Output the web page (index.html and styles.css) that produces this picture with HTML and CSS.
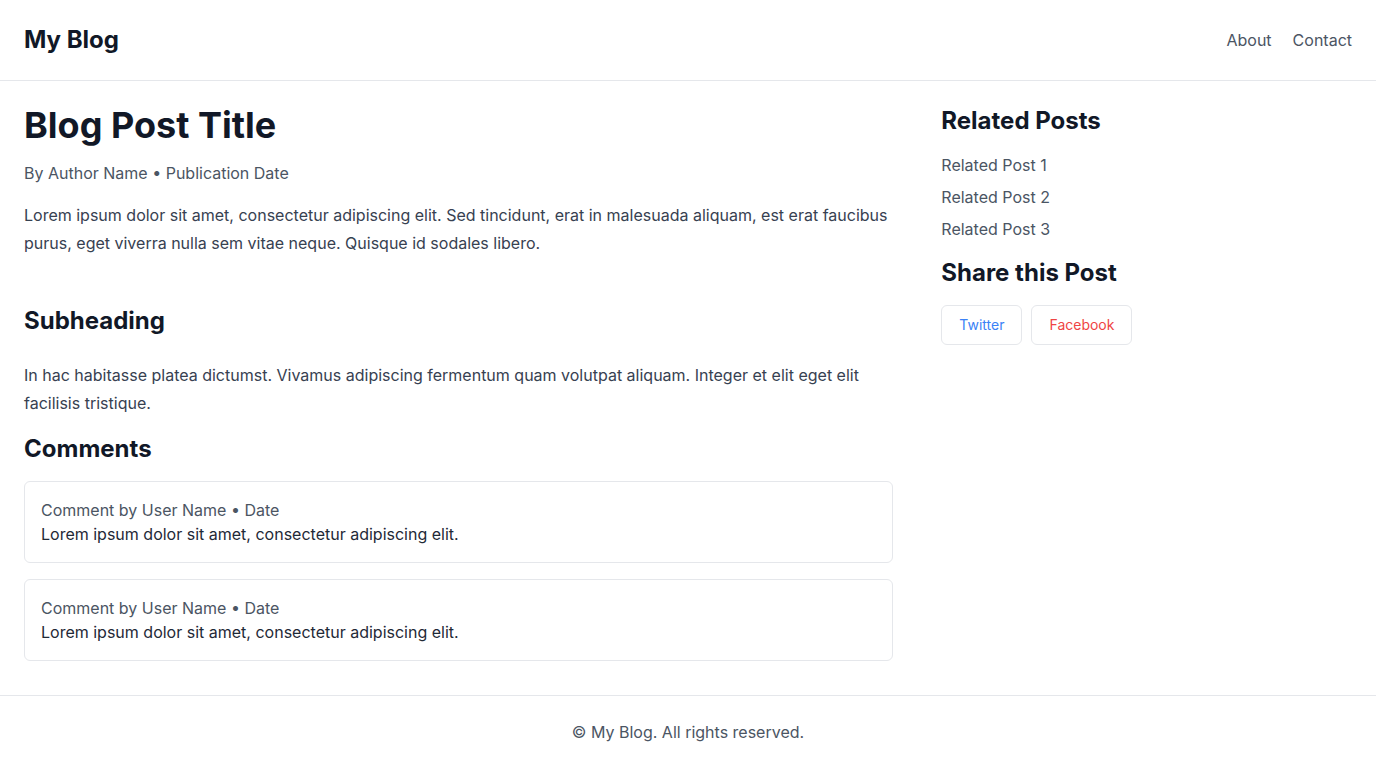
FILE: index.html
```html
<!DOCTYPE html>
<html lang="en">
<head>
<meta charset="utf-8">
<title>My Blog</title>
<link rel="stylesheet" href="styles.css">
</head>
<body>
<header class="site-header">
  <div class="brand">My Blog</div>
  <nav class="nav">
    <a href="#">About</a>
    <a href="#">Contact</a>
  </nav>
</header>
<main class="layout">
  <article class="post">
    <h1 class="post-title">Blog Post Title</h1>
    <p class="meta">By Author Name • Publication Date</p>
    <p class="body-text intro">Lorem ipsum dolor sit amet, consectetur adipiscing elit. Sed tincidunt, erat in malesuada aliquam, est erat faucibus purus, eget viverra nulla sem vitae neque. Quisque id sodales libero.</p>
    <h2 class="subheading">Subheading</h2>
    <p class="body-text">In hac habitasse platea dictumst. Vivamus adipiscing fermentum quam volutpat aliquam. Integer et elit eget elit facilisis tristique.</p>
    <h2 class="section-title">Comments</h2>
    <div class="comment">
      <div class="comment-meta">Comment by User Name • Date</div>
      <div class="comment-text">Lorem ipsum dolor sit amet, consectetur adipiscing elit.</div>
    </div>
    <div class="comment">
      <div class="comment-meta">Comment by User Name • Date</div>
      <div class="comment-text">Lorem ipsum dolor sit amet, consectetur adipiscing elit.</div>
    </div>
  </article>
  <aside class="sidebar">
    <h2 class="side-title">Related Posts</h2>
    <ul class="related">
      <li><a href="#">Related Post 1</a></li>
      <li><a href="#">Related Post 2</a></li>
      <li><a href="#">Related Post 3</a></li>
    </ul>
    <h2 class="side-title">Share this Post</h2>
    <div class="share">
      <a href="#" class="share-btn twitter">Twitter</a>
      <a href="#" class="share-btn facebook">Facebook</a>
    </div>
  </aside>
</main>
<footer class="site-footer">© My Blog. All rights reserved.</footer>
</body>
</html>
```

FILE: styles.css
```css
* { box-sizing: border-box; }
html, body { margin: 0; padding: 0; }
body {
  font-family: Inter, "Noto Sans", sans-serif;
  font-size: 16px;
  line-height: 24px;
  color: #111827;
  background: #ffffff;
}
a { text-decoration: none; color: inherit; }
h1, h2, p, ul { margin: 0; padding: 0; }

.site-header {
  display: flex;
  align-items: center;
  justify-content: space-between;
  padding: 24px;
  border-bottom: 1px solid #e5e7eb;
}
.brand {
  font-size: 24px;
  line-height: 32px;
  font-weight: 700;
  color: #111827;
}
.nav { display: flex; gap: 21px; }
.nav a { color: #4b5563; }

.layout {
  display: grid;
  grid-template-columns: repeat(3, minmax(0, 1fr));
  column-gap: 48px;
  padding: 24px 24px 34px;
}
.post { grid-column: span 2; }
.post-title {
  font-size: 36px;
  line-height: 40px;
  font-weight: 700;
  color: #111827;
  margin-bottom: 16px;
}
.meta { color: #4b5563; margin-bottom: 16px; }
.body-text { color: #374151; line-height: 28px; }
.intro { margin-bottom: 48px; }
.subheading {
  font-size: 24px;
  line-height: 32px;
  font-weight: 700;
  margin-bottom: 24px;
}
.section-title {
  font-size: 24px;
  line-height: 32px;
  font-weight: 700;
  margin-top: 16px;
  margin-bottom: 16px;
}
.comment {
  border: 1px solid #e5e7eb;
  border-radius: 6px;
  padding: 16px;
}
.comment + .comment { margin-top: 16px; }
.comment-meta { color: #4b5563; }
.comment-text { color: #1f2937; }

.side-title {
  font-size: 24px;
  line-height: 32px;
  font-weight: 700;
  margin-bottom: 16px;
}
.related { list-style: none; margin-bottom: 16px; display: flex; flex-direction: column; gap: 8px; }
.related a { color: #4b5563; }
.share { display: flex; gap: 9px; }
.share-btn {
  display: inline-block;
  font-size: 14px;
  line-height: 20px;
  padding: 9px 17px;
  border: 1px solid #e5e7eb;
  border-radius: 6px;
}
.twitter { color: #3b82f6; }
.facebook { color: #ef4444; }

.site-footer {
  border-top: 1px solid #e5e7eb;
  padding: 24px;
  text-align: center;
  color: #4b5563;
}
```
